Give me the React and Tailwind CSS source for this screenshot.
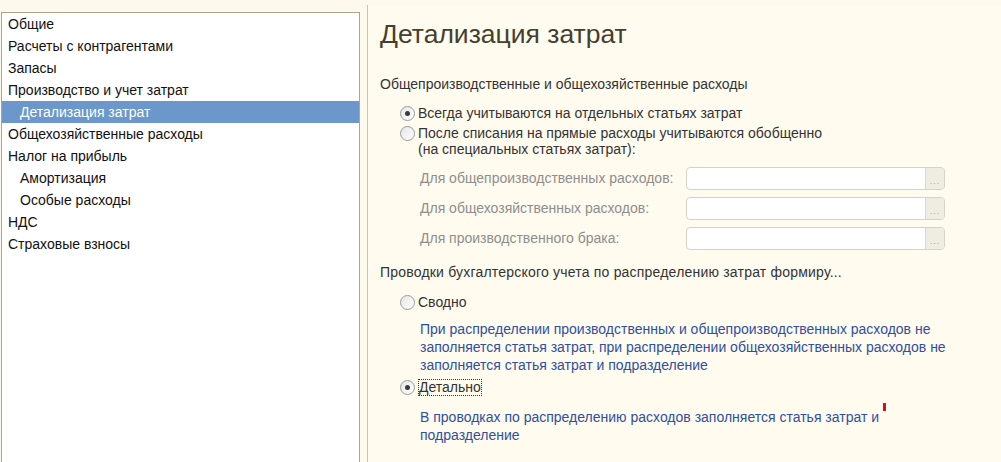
import React from "react";

const menu = [
  { label: "Общие", level: 0 },
  { label: "Расчеты с контрагентами", level: 0 },
  { label: "Запасы", level: 0 },
  { label: "Производство и учет затрат", level: 0 },
  { label: "Детализация затрат", level: 1, active: true },
  { label: "Общехозяйственные расходы", level: 0 },
  { label: "Налог на прибыль", level: 0 },
  { label: "Амортизация", level: 1 },
  { label: "Особые расходы", level: 1 },
  { label: "НДС", level: 0 },
  { label: "Страховые взносы", level: 0 },
];

const fields = [
  "Для общепроизводственных расходов:",
  "Для общехозяйственных расходов:",
  "Для производственного брака:",
];

function Radio({ checked }) {
  return (
    <span className="relative flex h-[15px] w-[15px] shrink-0 items-center justify-center rounded-full border border-[#9a9a9a] bg-gradient-to-br from-[#e6e6e6] to-white">
      {checked && <span className="h-[5px] w-[5px] rounded-full bg-[#3a3a3a]" />}
    </span>
  );
}

function Field({ label }) {
  return (
    <div className="flex h-[23px] items-center">
      <span className="w-[266px] text-[#8e8e8e]">{label}</span>
      <div className="flex h-[23px] w-[259px] overflow-hidden rounded-[4px] border border-[#d6d3c6] bg-white">
        <div className="flex-1" />
        <div className="flex w-[19px] items-end justify-center border-l border-[#dcd9cc] bg-[#efede2] pb-[3px] text-[9px] leading-none tracking-[1px] text-[#a8a69a]">
          ...
        </div>
      </div>
    </div>
  );
}

export default function App() {
  return (
    <div
      className="flex h-[462px] w-[1001px] overflow-hidden bg-[#fdf9ec] text-[14px]"
      style={{ fontFamily: '"Liberation Sans", Arial, sans-serif' }}
    >
      {/* Left – section tree */}
      <div className="ml-px mt-3 w-[359px] shrink-0 border-x border-t border-[#a9a88f] bg-white">
        {menu.map((item) => (
          <div
            key={item.label}
            className={`flex h-[22px] items-center ${
              item.level ? "pl-[18px]" : "pl-[6px]"
            } ${item.active ? "bg-[#6b97cb] text-white" : "text-[#111]"}`}
          >
            {item.label}
          </div>
        ))}
      </div>

      {/* Right – settings form */}
      <div className="ml-[7px] mt-[5px] flex-1 border-l border-[#c9c6b0] bg-[#fffbef] pl-3 pt-[14px] text-[#333]">
        <h1 className="text-[26.5px] leading-[30px] text-[#463f2e]">Детализация затрат</h1>

        <div className="mt-[27px] leading-4">Общепроизводственные и общехозяйственные расходы</div>

        <div className="mt-[11px] pl-[20px]">
          <div className="flex h-5 items-center gap-[3px]">
            <Radio checked />
            <span>Всегда учитываются на отдельных статьях затрат</span>
          </div>
          <div className="flex items-start gap-[3px] py-[2px] leading-4">
            <span className="mt-px">
              <Radio />
            </span>
            <span>
              После списания на прямые расходы учитываются обобщенно
              <br />
              (на специальных статьях затрат):
            </span>
          </div>
        </div>

        <div className="mt-2 flex flex-col gap-[7px] pl-[40px]">
          {fields.map((f) => (
            <Field key={f} label={f} />
          ))}
        </div>

        <div className="mt-[14px] leading-4 whitespace-nowrap tracking-[0.2px]">
          Проводки бухгалтерского учета по распределению затрат формиру...
        </div>

        <div className="mt-3 flex h-5 items-center gap-[3px] pl-5">
          <Radio />
          <span>Сводно</span>
        </div>
        <p className="mt-2 pl-10 leading-[18px] whitespace-nowrap text-[#2f4fa0]">
          При распределении производственных и общепроизводственных расходов не
          <br />
          заполняется статья затрат, при распределении общехозяйственных расходов не
          <br />
          заполняется статья затрат и подразделение
        </p>

        <div className="mt-[3px] flex h-5 items-center gap-[3px] pl-5">
          <Radio checked />
          <span className="border border-dotted border-[#333] leading-[15px]">Детально</span>
        </div>
        <div className="relative">
          <p className="mt-[11px] pl-10 leading-[18px] whitespace-nowrap text-[#2f4fa0]">
            В проводках по распределению расходов заполняется статья затрат и
            <br />
            подразделение
          </p>
          <span className="absolute left-[503px] top-[-5px] h-[8px] w-[3px] bg-[#d0141a]" />
        </div>
      </div>
    </div>
  );
}
